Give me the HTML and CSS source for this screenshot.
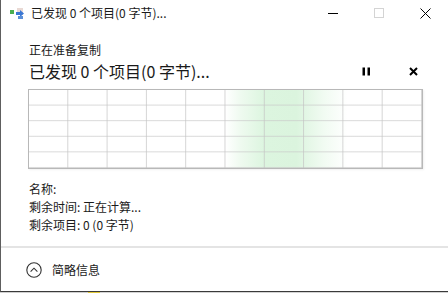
FILE: index.html
```html
<!DOCTYPE html>
<html lang="zh-CN">
<head>
<meta charset="utf-8">
<title>已发现 0 个项目(0 字节)...</title>
<link rel="stylesheet" href="styles.css">
</head>
<body>
<div class="window">
  <div class="titlebar">
    <svg class="app-icon" width="16" height="12" viewBox="0 0 16 12">
      <rect x="0" y="2" width="4" height="4" fill="#4caf50"/>
      <rect x="7" y="0" width="6" height="7" fill="#e9d9d4"/>
      <path d="M6 4h4V2l4 3.5L10 9V7H6z" fill="#3b78d4"/>
      <rect x="8" y="8" width="5" height="3" fill="#5b8fd8"/>
    </svg>
    <span class="title-text">已发现 0 个项目(0 字节)...</span>
    <div class="caption">
      <span class="cap-btn"><svg width="10" height="10" viewBox="0 0 10 10"><path d="M0 5.5h10" stroke="#000" stroke-width="1"/></svg></span>
      <span class="cap-btn"><svg width="10" height="10" viewBox="0 0 10 10"><rect x="0.5" y="0.5" width="9" height="9" fill="none" stroke="#d4d4d4" stroke-width="1"/></svg></span>
      <span class="cap-btn"><svg width="11" height="11" viewBox="0 0 11 11"><path d="M0.5 0.5l10 10M10.5 0.5l-10 10" stroke="#000" stroke-width="1"/></svg></span>
    </div>
  </div>
  <div class="content">
    <div class="status-small">正在准备复制</div>
    <div class="status-row">
      <span class="status-big">已发现 0 个项目(0 字节)...</span>
      <div class="actions">
        <span class="act-btn"><svg width="9" height="9" viewBox="0 0 9 9"><rect x="0.5" y="0.5" width="2.5" height="8" fill="#000"/><rect x="5.5" y="0.5" width="2.5" height="8" fill="#000"/></svg></span>
        <span class="act-btn"><svg width="9" height="9" viewBox="0 0 9 9"><path d="M1 1l7 7M8 1L1 8" stroke="#000" stroke-width="2"/></svg></span>
      </div>
    </div>
    <div class="graph"></div>
    <div class="details">
      <div class="line">名称:</div>
      <div class="line">剩余时间: 正在计算...</div>
      <div class="line">剩余项目: 0 (0 字节)</div>
    </div>
  </div>
  <div class="separator"></div>
  <div class="footer">
    <svg class="toggle" width="16" height="16" viewBox="0 0 16 16">
      <circle cx="8" cy="8" r="7.2" fill="none" stroke="#333" stroke-width="1.1"/>
      <path d="M4.6 9.6L8 6.2l3.4 3.4" fill="none" stroke="#333" stroke-width="1.1"/>
    </svg>
    <span class="footer-text">简略信息</span>
  </div>
</div>
<div class="desktop"></div>
</body>
</html>
```
FILE: styles.css
```css
html, body {
  margin: 0;
  padding: 0;
}
body {
  width: 448px;
  height: 293px;
  overflow: hidden;
  background: #d6d6d6;
  font-family: "Noto Sans CJK SC", "Noto Sans", sans-serif;
  color: #1a1a1a;
  font-size: 12px;
}
.window {
  box-sizing: border-box;
  height: 292px;
  background: #fff;
  border-left: 1px solid #5e5e5e;
  border-bottom: 1px solid #3a3a3a;
  display: flex;
  flex-direction: column;
}
.titlebar {
  height: 26px;
  display: flex;
  align-items: center;
}
.app-icon {
  margin-left: 9px;
  margin-top: 1px;
}
.title-text {
  margin-left: 5px;
  font-size: 12px;
  line-height: 26px;
  flex: 1;
  white-space: nowrap;
}
.caption {
  display: flex;
  height: 26px;
}
.cap-btn {
  width: 46px;
  height: 26px;
  display: flex;
  align-items: center;
  justify-content: center;
}
.content {
  padding-left: 27px;
  display: flex;
  flex-direction: column;
}
.status-small {
  margin-top: 15px;
  margin-left: 1px;
  line-height: 18px;
  font-size: 12px;
}
.status-row {
  height: 24px;
  display: flex;
  align-items: center;
  padding-right: 23px;
}
.status-big {
  flex: 1;
  margin-left: 1px;
  font-size: 16px;
  line-height: 24px;
  white-space: nowrap;
}
.actions {
  display: flex;
  gap: 23px;
}
.act-btn {
  width: 24px;
  height: 24px;
  display: flex;
  align-items: center;
  justify-content: center;
}
.graph {
  box-sizing: border-box;
  margin-top: 6px;
  width: 395px;
  height: 80px;
  border: 1px solid #b8b8b8;
  background-color: #fff;
  background-image:
    linear-gradient(to right, rgba(195,195,195,0.7) 1px, transparent 1px),
    linear-gradient(to bottom, rgba(200,200,200,0.7) 1px, transparent 1px),
    linear-gradient(to right, transparent 50%, #eefaef 54%, #dcf5df 60%, #dbf4de 68%, #f1fbf2 75%, transparent 81%);
  background-size: 10% 100%, 100% 20%, 100% 100%;
  background-position: -1px 0, 0 -1px, 0 0;
  box-shadow: 1px 1px 2px rgba(0,0,0,0.06);
}
.details {
  margin-top: 11px;
  margin-left: 1px;
}
.line {
  line-height: 18px;
  font-size: 12px;
  white-space: nowrap;
}
.separator {
  margin-top: 12px;
  height: 2px;
  background: #e4e4e4;
}
.footer {
  flex: 1;
  display: flex;
  align-items: center;
}
.toggle {
  margin-left: 25px;
}
.footer-text {
  margin-left: 10px;
  font-size: 12px;
  line-height: 18px;
}
.desktop {
  height: 1px;
  background: linear-gradient(to right, #cfcfcf 0, #cfcfcf 88px, #e2c93a 88px, #e2c93a 100px, #d3d3d3 100px);
}
```
